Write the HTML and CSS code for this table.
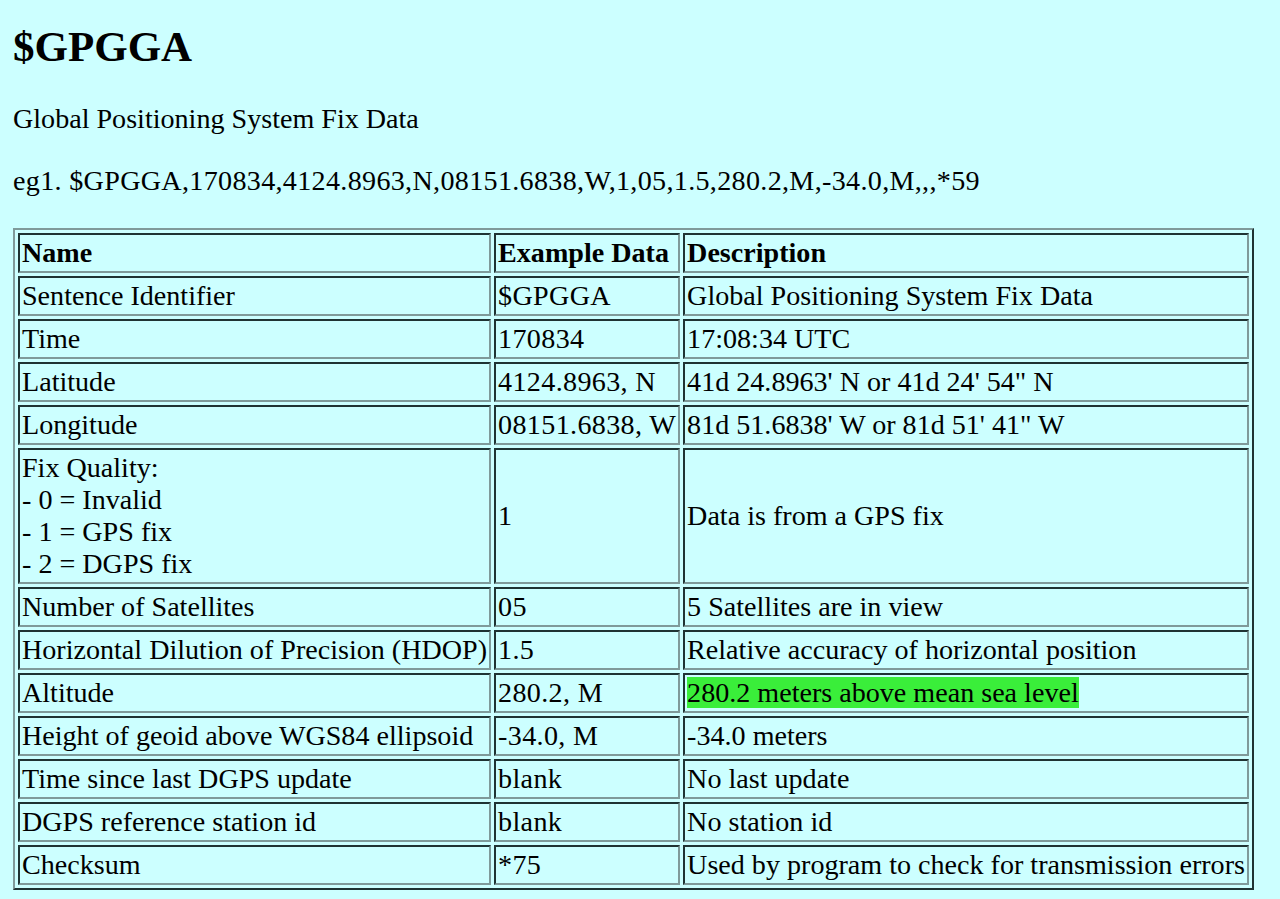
FILE: index.html
```html
<!DOCTYPE html>
<html>
<head>
<meta charset="utf-8">
<title>$GPGGA</title>
<link rel="stylesheet" href="styles.css">
</head>
<body>
<h1 class="title">$GPGGA</h1>
<p class="para">Global Positioning System Fix Data</p>
<p class="para eg">eg1. $GPGGA,170834,4124.8963,N,08151.6838,W,1,05,1.5,280.2,M,-34.0,M,,,*59</p>
<table class="nmea">
<tr><th>Name</th><th>Example Data</th><th>Description</th></tr>
<tr><td>Sentence Identifier</td><td class="data">$GPGGA</td><td>Global Positioning System Fix Data</td></tr>
<tr><td>Time</td><td class="data">170834</td><td>17:08:34 UTC</td></tr>
<tr><td>Latitude</td><td class="data">4124.8963, N</td><td>41d 24.8963' N or 41d 24' 54" N</td></tr>
<tr><td>Longitude</td><td class="data">08151.6838, W</td><td>81d 51.6838' W or 81d 51' 41" W</td></tr>
<tr><td>Fix Quality:<br>- 0 = Invalid<br>- 1 = GPS fix<br>- 2 = DGPS fix</td><td class="data">1</td><td>Data is from a GPS fix</td></tr>
<tr><td>Number of Satellites</td><td class="data">05</td><td>5 Satellites are in view</td></tr>
<tr><td>Horizontal Dilution of Precision (HDOP)</td><td class="data">1.5</td><td>Relative accuracy of horizontal position</td></tr>
<tr><td>Altitude</td><td class="data">280.2, M</td><td><span class="hl">280.2 meters above mean sea level</span></td></tr>
<tr><td>Height of geoid above WGS84 ellipsoid</td><td class="data">-34.0, M</td><td>-34.0 meters</td></tr>
<tr><td>Time since last DGPS update</td><td class="data">blank</td><td>No last update</td></tr>
<tr><td>DGPS reference station id</td><td class="data">blank</td><td>No station id</td></tr>
<tr><td>Checksum</td><td class="data">*75</td><td>Used by program to check for transmission errors</td></tr>
</table>
</body>
</html>
```

FILE: styles.css
```css
html {
  background: #ccffff;
}
body {
  margin: 0 13px 12px;
  padding-top: 22px;
  background: #ccffff;
  color: #000;
  font-family: "Liberation Serif", "Times New Roman", serif;
  font-size: 28.1px;
  line-height: 32px;
}
.title {
  font-size: 43px;
  line-height: 50px;
  font-weight: bold;
  margin: 0 0 31px;
}
.para {
  margin: 0 0 30px;
}
.eg {
  letter-spacing: 0.32px;
}
.nmea {
  border-collapse: separate;
  border-spacing: 3px;
  border: 2px solid;
  border-color: #7f9a9a #1f3333 #1f3333 #7f9a9a;
  margin-top: 31px;
}
.nmea th,
.nmea td {
  border: 2px solid;
  border-color: #1f3333 #7f9a9a #7f9a9a #1f3333;
  padding: 2px 2px;
  text-align: left;
  vertical-align: middle;
  line-height: 32px;
}
.nmea th {
  font-weight: bold;
}
.nmea .data {
  letter-spacing: 0.35px;
}
.hl {
  background: #3aee3a;
}
```
